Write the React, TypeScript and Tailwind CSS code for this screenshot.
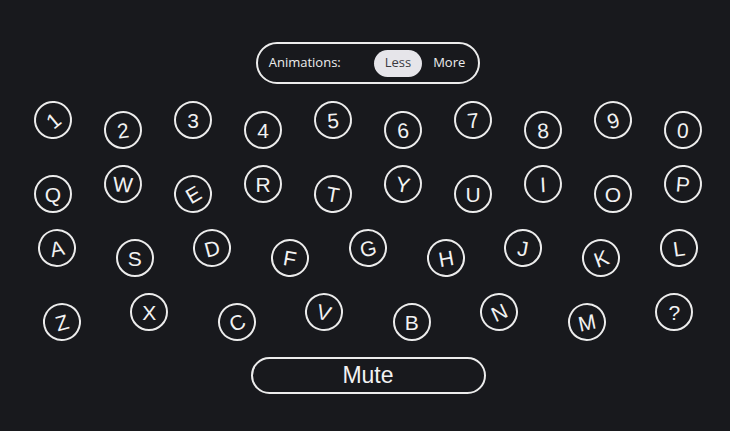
import React from 'react';

type Key = { label: string; rot: string };

// rotation classes are written out in full so tailwind picks them up
const rows: { keys: Key[]; downEven: boolean }[] = [
  {
    downEven: false,
    keys: [
      { label: '1', rot: 'rotate-[-40deg]' },
      { label: '2', rot: 'rotate-[-8deg]' },
      { label: '3', rot: 'rotate-0' },
      { label: '4', rot: 'rotate-0' },
      { label: '5', rot: 'rotate-[-4deg]' },
      { label: '6', rot: 'rotate-[-6deg]' },
      { label: '7', rot: 'rotate-[-6deg]' },
      { label: '8', rot: 'rotate-[-4deg]' },
      { label: '9', rot: 'rotate-[-18deg]' },
      { label: '0', rot: 'rotate-[4deg]' },
    ],
  },
  {
    downEven: true,
    keys: [
      { label: 'Q', rot: 'rotate-0' },
      { label: 'W', rot: 'rotate-[4deg]' },
      { label: 'E', rot: 'rotate-[-30deg]' },
      { label: 'R', rot: 'rotate-0' },
      { label: 'T', rot: 'rotate-[10deg]' },
      { label: 'Y', rot: 'rotate-[10deg]' },
      { label: 'U', rot: 'rotate-0' },
      { label: 'I', rot: 'rotate-[-3deg]' },
      { label: 'O', rot: 'rotate-0' },
      { label: 'P', rot: 'rotate-[5deg]' },
    ],
  },
  {
    downEven: false,
    keys: [
      { label: 'A', rot: 'rotate-[-12deg]' },
      { label: 'S', rot: 'rotate-0' },
      { label: 'D', rot: 'rotate-[-15deg]' },
      { label: 'F', rot: 'rotate-[10deg]' },
      { label: 'G', rot: 'rotate-[-14deg]' },
      { label: 'H', rot: 'rotate-[-10deg]' },
      { label: 'J', rot: 'rotate-[10deg]' },
      { label: 'K', rot: 'rotate-[-20deg]' },
      { label: 'L', rot: 'rotate-[-8deg]' },
    ],
  },
  {
    downEven: true,
    keys: [
      { label: 'Z', rot: 'rotate-[-15deg]' },
      { label: 'X', rot: 'rotate-0' },
      { label: 'C', rot: 'rotate-[-25deg]' },
      { label: 'V', rot: 'rotate-[15deg]' },
      { label: 'B', rot: 'rotate-0' },
      { label: 'N', rot: 'rotate-[-25deg]' },
      { label: 'M', rot: 'rotate-[-12deg]' },
      { label: '?', rot: 'rotate-0' },
    ],
  },
];

function KeyCap({ k, down }: { k: Key; down: boolean }) {
  return (
    <div className={down ? 'mt-[10px]' : 'mt-0'}>
      <div
        className={`w-[38px] h-[38px] rounded-full border-2 border-[#ececec] flex items-center justify-center text-[21px] leading-none text-[#f2f2f2] ${k.rot}`}
        style={{ fontFamily: '"Liberation Sans", Arial, sans-serif' }}
      >
        {k.label}
      </div>
    </div>
  );
}

export default function App() {
  return (
    <div className="w-[730px] h-[431px] bg-[#18191d] overflow-hidden">
      <div className="w-[700px] ml-[18px] flex flex-col items-center pt-[42px]">
        <div
          className="h-[42px] rounded-full border-2 border-[#ececec] flex items-center pl-[11px] pr-[2px] text-[13px] text-[#ededed]"
          style={{ fontFamily: '"Open Sans", "Noto Sans", sans-serif' }}
        >
          <span className="w-[105px]">Animations:</span>
          <span className="h-[27px] px-[11px] rounded-full bg-[#e6e5ea] text-[#3a3a3f] flex items-center">Less</span>
          <span className="h-[27px] px-[11px] flex items-center">More</span>
        </div>

        <div className="w-full flex flex-col gap-[16px] mt-[17px]">
          {rows.map((row, ri) => (
            <div key={ri} className="h-[48px] flex justify-around items-start">
              {row.keys.map((k, i) => (
                <KeyCap key={k.label} k={k} down={row.downEven ? i % 2 === 0 : i % 2 === 1} />
              ))}
            </div>
          ))}
        </div>

        <button
          className="mt-[16px] w-[235px] h-[37px] rounded-full border-2 border-[#ececec] text-[23px] text-[#f2f2f2] flex items-center justify-center"
          style={{ fontFamily: '"Liberation Sans", Arial, sans-serif' }}
        >
          Mute
        </button>
      </div>
    </div>
  );
}
